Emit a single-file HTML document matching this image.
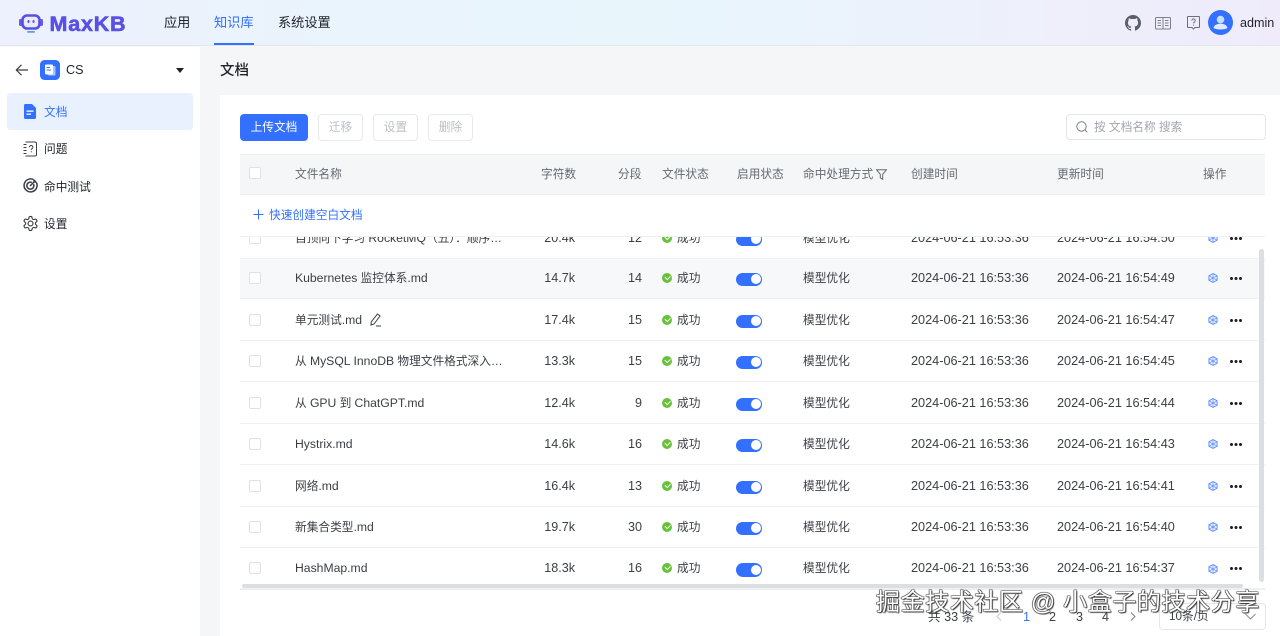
<!DOCTYPE html>
<html lang="zh"><head><meta charset="utf-8"><title>MaxKB</title>
<style>
*{box-sizing:border-box}
html,body{margin:0;padding:0}
body{width:1280px;height:636px;overflow:hidden;position:relative;background:#f5f6f7;font-family:"Liberation Sans","Noto Sans CJK SC",sans-serif;color:#1f2329;font-size:11.7px}
.a{position:absolute;white-space:nowrap}
.hd{position:absolute;left:0;top:0;width:1280px;height:46px;background:linear-gradient(90deg,#ecf1fd 0%,#eaf4fc 30%,#e8f6fc 50%,#edf1fb 75%,#efebfb 100%);border-bottom:1px solid #e4e6ea}
.nav{top:14px;font-size:13.2px;line-height:18px;color:#1f2329}
.side{position:absolute;left:0;top:47px;width:200px;height:589px;background:#fff}
.mi{left:44px;font-size:11.7px;line-height:16px;color:#1f2329}
.card{position:absolute;left:220px;top:95px;width:1060px;height:541px;background:#fff}
.btn{position:absolute;top:114px;height:26.500px;border:1px solid #e8e9eb;border-radius:4px;background:#fff;color:#bbbfc4;font-size:11.7px;line-height:26px;text-align:center}
.th{position:absolute;top:167px;font-size:11.7px;line-height:16px;color:#646a73;white-space:nowrap}
.cb{position:absolute;left:9px;width:12px;height:12px;border:1px solid #dfe1e5;border-radius:2px;background:#fff}
.body{position:absolute;left:240px;top:236px;width:1025px;height:354px;overflow:hidden}
.r{position:absolute;left:0;width:1025px;height:41.400px;border-bottom:1px solid #eff0f1;color:#3b3f45}
.r .cb{top:14px}
.r span.c{position:absolute;top:12px;line-height:16px;white-space:nowrap}
.n{left:55px;font-size:11.7px}
.l{font-size:12.200px}
.r span.q{right:690px;font-size:12.600px}
.r span.f{right:623px;font-size:12.600px}
.ok{position:absolute;left:422px;top:15px;width:10px;height:10px;border-radius:50%;background:#67c23a}
.ok:after{content:"";position:absolute;left:2.800px;top:2.200px;width:4.400px;height:2.800px;border-left:1.200px solid #fff;border-bottom:1.200px solid #fff;transform:rotate(-45deg)}
.r span.s{left:437px;top:13px}
.sw{position:absolute;left:496px;top:15px;width:26px;height:13.500px;border-radius:7px;background:#3370ff}
.sw:after{content:"";position:absolute;right:1.500px;top:1.800px;width:10px;height:10px;border-radius:50%;background:#fff}
.r span.m{left:563px;top:13px}
.t1{left:671px;font-size:12.700px}
.t2{left:817px;font-size:12.700px}
.ic{position:absolute;left:967.500px;top:15.500px}
.d{position:absolute;left:990px;top:19px;width:12px;height:3px;background:radial-gradient(circle at 1.500px 1.500px,#1f2329 1.400px,transparent 1.600px) 0 0/4.500px 3px repeat-x}
.pg{top:609px;font-size:12.600px;line-height:16px;color:#3b3f45}
.wm{left:876px;top:588px;font-size:24px;line-height:30px;color:#fff;letter-spacing:.6px;text-shadow:1px 1px 1px #333,-.6px -.6px .5px #555,.6px -.6px .5px #555,-.6px .6px .5px #555}
</style></head><body>

<svg width="0" height="0" style="position:absolute"><symbol id="hx" viewBox="0 0 11 11"><path d="M5.500.6 10 3v5l-4.500 2.400L1 8V3z" fill="#e6eeff" stroke="#4a80ff" stroke-width=".9"/><path d="M1 3l9 5M10 3 1 8M5.500.6v9.800" fill="none" stroke="#4a80ff" stroke-width=".6"/></symbol></svg>

<div class="hd"></div>
<svg class="a" style="left:18px;top:13px" width="26" height="22" viewBox="0 0 26 22"><rect x="1" y="6" width="3" height="7" rx="1.500" fill="#6a5ce6"/><rect x="22" y="6" width="3" height="7" rx="1.500" fill="#6a5ce6"/><rect x="4.500" y="2.500" width="17" height="13" rx="4.500" fill="#e8ecfd" stroke="#5b4fe3" stroke-width="2.600"/><rect x="9.500" y="7" width="2" height="3" rx="1" fill="#5b4fe3"/><rect x="14.500" y="7" width="2" height="3" rx="1" fill="#5b4fe3"/><rect x="9" y="18" width="8" height="1.800" rx=".9" fill="#5b9bf0"/></svg>
<div class="a" style="left:49.500px;top:12px;font-size:21.500px;line-height:24px;font-weight:700;color:#5a50e4;letter-spacing:.8px;-webkit-text-stroke:.6px #5a50e4">MaxKB</div>
<div class="a nav" style="left:164px">应用</div>
<div class="a nav" style="left:214px;color:#3370ff">知识库</div>
<div class="a" style="left:214px;top:43px;width:40px;height:2px;background:#3370ff"></div>
<div class="a nav" style="left:278px">系统设置</div>

<svg class="a" style="left:1125px;top:15px" width="16" height="16" viewBox="0 0 16 16"><path fill="#5a5e66" d="M8 0C3.580 0 0 3.580 0 8c0 3.540 2.290 6.530 5.470 7.590.4.070.55-.17.55-.38v-1.340c-2.230.48-2.700-1.070-2.700-1.070-.36-.92-.89-1.170-.89-1.170-.73-.5.050-.49.050-.49.8.060 1.230.83 1.230.83.72 1.220 1.870.87 2.330.66.070-.52.280-.87.5-1.070-1.780-.2-3.640-.89-3.640-3.950 0-.87.310-1.590.82-2.150-.08-.2-.36-1.020.080-2.120 0 0 .67-.21 2.200.82A7.600 7.600 0 0 1 8 3.860c.68 0 1.360.09 2 .27 1.530-1.040 2.200-.82 2.200-.82.44 1.100.16 1.920.08 2.120.51.56.82 1.270.82 2.150 0 3.070-1.870 3.750-3.650 3.950.29.25.54.73.54 1.480v2.200c0 .21.15.46.55.38A8 8 0 0 0 16 8c0-4.420-3.580-8-8-8z"/></svg>
<svg class="a" style="left:1155px;top:17px" width="16" height="13" viewBox="0 0 16 13" fill="none" stroke="#7b7f87" stroke-width="1"><rect x=".5" y=".5" width="15" height="11.500" rx="1"/><path d="M8 .5V12M2.500 3.500h3.500M2.500 6h3.500M2.500 8.500h3.500M10 3.500h3.500M10 6h3.500M10 8.500h3.500"/></svg>
<svg class="a" style="left:1187px;top:16px" width="13" height="14" viewBox="0 0 13 14" fill="none" stroke="#6b6f77" stroke-width="1"><path d="M1 .5h11a.5.5 0 0 1 .5.5v10a.5.5 0 0 1-.5.5H8L6.500 13 5 11.500H1a.5.5 0 0 1-.5-.5V1A.5.5 0 0 1 1 .5z"/><path d="M4.800 4.600a1.700 1.700 0 1 1 2.600 1.500c-.6.4-.9.7-.9 1.300M6.500 8.600v1"/></svg>
<svg class="a" style="left:1208px;top:10px" width="25" height="25" viewBox="0 0 25 25"><circle cx="12.500" cy="12.500" r="12.500" fill="#3370ff"/><circle cx="12.500" cy="9.600" r="3.800" fill="#c9dcff"/><path d="M5.500 18c.8-3 3.500-4.200 7-4.200s6.200 1.200 7 4.200c-1.500 1-4 1.500-7 1.500s-5.500-.5-7-1.500z" fill="#e0eaff"/></svg>
<div class="a" style="left:1240px;top:15px;font-size:12.600px;line-height:16px;color:#1f2329">admin</div>

<div class="side"></div>
<svg class="a" style="left:15px;top:63px" width="14" height="14" viewBox="0 0 14 14" fill="none" stroke="#3b3f45" stroke-width="1.200"><path d="M13 7H1.500M6.500 1.800 1.300 7l5.200 5.200"/></svg>
<svg class="a" style="left:40px;top:60px" width="20" height="20" viewBox="0 0 20 20"><rect width="20" height="20" rx="4.500" fill="#3370ff"/><rect x="8" y="6" width="7.500" height="9.500" rx="1" fill="#a9c5ff"/><rect x="5" y="4.500" width="8" height="10" rx="1.200" fill="#fff"/><rect x="6.500" y="7" width="3.500" height="1" fill="#3370ff"/><rect x="6.500" y="9.500" width="4.500" height="1" fill="#3370ff"/></svg>
<div class="a" style="left:66px;top:62px;font-size:12.600px;line-height:16px;color:#1f2329">CS</div>
<div class="a" style="left:176px;top:68px;width:0;height:0;border-left:4.500px solid transparent;border-right:4.500px solid transparent;border-top:5px solid #1f2329"></div>

<div class="a" style="left:7px;top:93px;width:186px;height:37px;background:#e9f0fe;border-radius:4px"></div>
<svg class="a" style="left:24px;top:103.500px" width="12" height="15" viewBox="0 0 12 15"><path d="M1.500 0H8l4 4v9.500a1.500 1.500 0 0 1-1.500 1.500h-9A1.500 1.500 0 0 1 0 13.500v-12A1.500 1.500 0 0 1 1.500 0z" fill="#3370ff"/><rect x="2.500" y="6.500" width="7" height="1.300" fill="#fff"/><rect x="2.500" y="9.500" width="4.500" height="1.300" fill="#fff"/></svg>
<div class="a mi" style="top:105px;color:#3370ff">文档</div>
<svg class="a" style="left:23px;top:141px" width="14" height="16" viewBox="0 0 14 16" fill="none" stroke="#3b3f45" stroke-width="1"><path d="M2.500 1H12a1.500 1.500 0 0 1 1.500 1.500v11A1.500 1.500 0 0 1 12 15H2.500"/><path d="M.5 3.500h3M.5 6.500h3M.5 9.500h3M.5 12.500h3"/><path d="M6.500 6.200a1.700 1.700 0 1 1 2.600 1.400c-.6.4-.8.7-.8 1.300M8.300 10.300v1"/></svg>
<div class="a mi" style="top:142px">问题</div>
<svg class="a" style="left:23px;top:178px" width="15" height="15" viewBox="0 0 15 15" fill="none" stroke="#3b3f45" stroke-width="1.500"><path d="M10.500 1.600A6.500 6.500 0 1 0 13.400 4.500"/><path d="M8.900 4.500A3.500 3.500 0 1 0 10.500 6.100"/><path d="M7 8 12.500 2.500M11 1.500v2.500h2.500"/></svg>
<div class="a mi" style="top:180px">命中测试</div>
<svg class="a" style="left:21.500px;top:215px" width="17" height="17" viewBox="0 0 24 24" fill="none" stroke="#3b3f45" stroke-width="1.600"><path d="M12.220 2h-.44a2 2 0 0 0-2 2v.18a2 2 0 0 1-1 1.730l-.43.25a2 2 0 0 1-2 0l-.15-.08a2 2 0 0 0-2.730.73l-.22.38a2 2 0 0 0 .73 2.730l.15.1a2 2 0 0 1 1 1.720v.51a2 2 0 0 1-1 1.740l-.15.09a2 2 0 0 0-.73 2.730l.22.38a2 2 0 0 0 2.730.73l.15-.08a2 2 0 0 1 2 0l.43.25a2 2 0 0 1 1 1.730V20a2 2 0 0 0 2 2h.44a2 2 0 0 0 2-2v-.18a2 2 0 0 1 1-1.730l.43-.25a2 2 0 0 1 2 0l.15.08a2 2 0 0 0 2.730-.73l.22-.39a2 2 0 0 0-.73-2.730l-.15-.08a2 2 0 0 1-1-1.740v-.5a2 2 0 0 1 1-1.740l.15-.09a2 2 0 0 0 .73-2.730l-.22-.38a2 2 0 0 0-2.730-.73l-.15.08a2 2 0 0 1-2 0l-.43-.25a2 2 0 0 1-1-1.730V4a2 2 0 0 0-2-2z"/><circle cx="12" cy="12" r="3.500"/></svg>
<div class="a mi" style="top:217px">设置</div>

<div class="a" style="left:220px;top:61px;font-size:14.500px;line-height:20px;font-weight:500;color:#1f2329">文档</div>
<div class="card"></div>

<div class="btn" style="left:240px;width:68px;background:#3370ff;border-color:#3370ff;color:#fff">上传文档</div>
<div class="btn" style="left:318px;width:45px">迁移</div>
<div class="btn" style="left:373px;width:45px">设置</div>
<div class="btn" style="left:428px;width:45px">删除</div>
<div class="a" style="left:1066px;top:114px;width:200px;height:26px;border:1px solid #e4e6ea;border-radius:4px;background:#fff"></div>
<svg class="a" style="left:1076px;top:121px" width="12" height="12" viewBox="0 0 12 12" fill="none" stroke="#7a7e86" stroke-width="1"><circle cx="5.500" cy="5.500" r="4.700"/><path d="M9 9l2.300 2.300"/></svg>
<div class="a" style="left:1094px;top:120px;font-size:11.700px;line-height:16px;color:#a3a7ae">按 文档名称 搜索</div>

<div class="a" style="left:240px;top:154px;width:1025px;height:41px;background:#f5f6f7;border-top:1px solid #ebeef0;border-bottom:1px solid #ebeef0"></div>
<div class="cb" style="left:249px;top:167px"></div>
<div class="th" style="left:295px">文件名称</div>
<div class="th" style="left:541px">字符数</div>
<div class="th" style="left:618px">分段</div>
<div class="th" style="left:662px">文件状态</div>
<div class="th" style="left:737px">启用状态</div>
<div class="th" style="left:803px">命中处理方式</div>
<svg class="a" style="left:876px;top:169px" width="11" height="11" viewBox="0 0 11 11" fill="none" stroke="#646a73" stroke-width="1"><path d="M.6.800h9.800L6.700 5.300v5L4.300 8.800V5.300z"/></svg>
<div class="th" style="left:911px">创建时间</div>
<div class="th" style="left:1057px">更新时间</div>
<div class="th" style="left:1203px">操作</div>

<svg class="a" style="left:253px;top:209px" width="11" height="11" viewBox="0 0 11 11" stroke="#3370ff" stroke-width="1"><path d="M5.500.5v10M.5 5.500h10"/></svg>
<div class="a" style="left:269px;top:208px;font-size:11.700px;line-height:16px;color:#3370ff">快速创建空白文档</div>

<div class="body">
<div class="a" style="left:0;top:22px;width:1025px;height:41px;background:#f7f8fa"></div>

<div class="r" style="top:-18.500px"><div class="cb"></div><span class="c n">自顶向下学习 <span class="l">RocketMQ</span>（五）：顺序…</span><span class="c q">20.4k</span><span class="c f">12</span><div class="ok"></div><span class="c s">成功</span><div class="sw"></div><span class="c m">模型优化</span><span class="c t1">2024-06-21 16:53:36</span><span class="c t2">2024-06-21 16:54:50</span><svg class="ic" width="10" height="10"><use href="#hx"/></svg><div class="d"></div></div>

<div class="r" style="top:21.500px"><div class="cb"></div><span class="c n"><span class="l">Kubernetes</span> 监控体系<span class="l">.md</span></span><span class="c q">14.7k</span><span class="c f">14</span><div class="ok"></div><span class="c s">成功</span><div class="sw"></div><span class="c m">模型优化</span><span class="c t1">2024-06-21 16:53:36</span><span class="c t2">2024-06-21 16:54:49</span><svg class="ic" width="10" height="10"><use href="#hx"/></svg><div class="d"></div></div>

<div class="r" style="top:63.500px"><div class="cb"></div><span class="c n">单元测试<span class="l">.md</span></span><svg class="a" style="left:129px;top:13px" width="13" height="14" viewBox="0 0 13 14" fill="none" stroke="#3b3f45" stroke-width="1"><path d="M8.500 1 11 3 5 11l-3 1 .2-3zM7 13h5"/></svg><span class="c q">17.4k</span><span class="c f">15</span><div class="ok"></div><span class="c s">成功</span><div class="sw"></div><span class="c m">模型优化</span><span class="c t1">2024-06-21 16:53:36</span><span class="c t2">2024-06-21 16:54:47</span><svg class="ic" width="10" height="10"><use href="#hx"/></svg><div class="d"></div></div>

<div class="r" style="top:104.500px"><div class="cb"></div><span class="c n">从 <span class="l">MySQL InnoDB</span> 物理文件格式深入…</span><span class="c q">13.3k</span><span class="c f">15</span><div class="ok"></div><span class="c s">成功</span><div class="sw"></div><span class="c m">模型优化</span><span class="c t1">2024-06-21 16:53:36</span><span class="c t2">2024-06-21 16:54:45</span><svg class="ic" width="10" height="10"><use href="#hx"/></svg><div class="d"></div></div>

<div class="r" style="top:146.500px"><div class="cb"></div><span class="c n">从 <span class="l">GPU</span> 到 <span class="l">ChatGPT.md</span></span><span class="c q">12.4k</span><span class="c f">9</span><div class="ok"></div><span class="c s">成功</span><div class="sw"></div><span class="c m">模型优化</span><span class="c t1">2024-06-21 16:53:36</span><span class="c t2">2024-06-21 16:54:44</span><svg class="ic" width="10" height="10"><use href="#hx"/></svg><div class="d"></div></div>

<div class="r" style="top:187.500px"><div class="cb"></div><span class="c n l">Hystrix.md</span><span class="c q">14.6k</span><span class="c f">16</span><div class="ok"></div><span class="c s">成功</span><div class="sw"></div><span class="c m">模型优化</span><span class="c t1">2024-06-21 16:53:36</span><span class="c t2">2024-06-21 16:54:43</span><svg class="ic" width="10" height="10"><use href="#hx"/></svg><div class="d"></div></div>

<div class="r" style="top:229.500px"><div class="cb"></div><span class="c n">网络<span class="l">.md</span></span><span class="c q">16.4k</span><span class="c f">13</span><div class="ok"></div><span class="c s">成功</span><div class="sw"></div><span class="c m">模型优化</span><span class="c t1">2024-06-21 16:53:36</span><span class="c t2">2024-06-21 16:54:41</span><svg class="ic" width="10" height="10"><use href="#hx"/></svg><div class="d"></div></div>

<div class="r" style="top:270.500px"><div class="cb"></div><span class="c n">新集合类型<span class="l">.md</span></span><span class="c q">19.7k</span><span class="c f">30</span><div class="ok"></div><span class="c s">成功</span><div class="sw"></div><span class="c m">模型优化</span><span class="c t1">2024-06-21 16:53:36</span><span class="c t2">2024-06-21 16:54:40</span><svg class="ic" width="10" height="10"><use href="#hx"/></svg><div class="d"></div></div>

<div class="r" style="top:312px"><div class="cb"></div><span class="c n l">HashMap.md</span><span class="c q">18.3k</span><span class="c f">16</span><div class="ok"></div><span class="c s">成功</span><div class="sw"></div><span class="c m">模型优化</span><span class="c t1">2024-06-21 16:53:36</span><span class="c t2">2024-06-21 16:54:37</span><svg class="ic" width="10" height="10"><use href="#hx"/></svg><div class="d"></div></div>
</div>
<div class="a" style="left:240px;top:235.500px;width:1025px;height:1px;background:#eff0f1"></div>
<div class="a" style="left:240px;top:589px;width:1025px;height:1px;background:#ebeef0"></div>
<div class="a" style="left:1259px;top:249px;width:5px;height:333px;border-radius:3px;background:#dcdfe1"></div>
<div class="a" style="left:242px;top:584px;width:1001px;height:4px;border-radius:2px;background:#dcdfe1"></div>

<div class="a pg" style="left:928px">共 33 条</div>
<svg class="a" style="left:996px;top:612px" width="6" height="9" viewBox="0 0 6 9" fill="none" stroke="#c5c8cc" stroke-width="1"><path d="M5 .5 1 4.500 5 8.500"/></svg>
<div class="a pg" style="left:1023px;color:#3370ff">1</div>
<div class="a pg" style="left:1049px">2</div>
<div class="a pg" style="left:1076px">3</div>
<div class="a pg" style="left:1102px">4</div>
<svg class="a" style="left:1130px;top:612px" width="6" height="9" viewBox="0 0 6 9" fill="none" stroke="#7a7e86" stroke-width="1"><path d="M1 .5 5 4.500 1 8.500"/></svg>
<div class="a" style="left:1159px;top:603px;width:107px;height:27px;border:1px solid #e4e6ea;border-radius:4px;background:#fff"></div>
<div class="a pg" style="left:1169px;font-size:11.700px">10条/页</div>
<svg class="a" style="left:1245px;top:613px" width="11" height="7" viewBox="0 0 11 7" fill="none" stroke="#8a8e95" stroke-width="1"><path d="M.5 1 5.500 6l5-5"/></svg>

<div class="a wm">掘金技术社区 @ 小盒子的技术分享</div>
</body></html>
